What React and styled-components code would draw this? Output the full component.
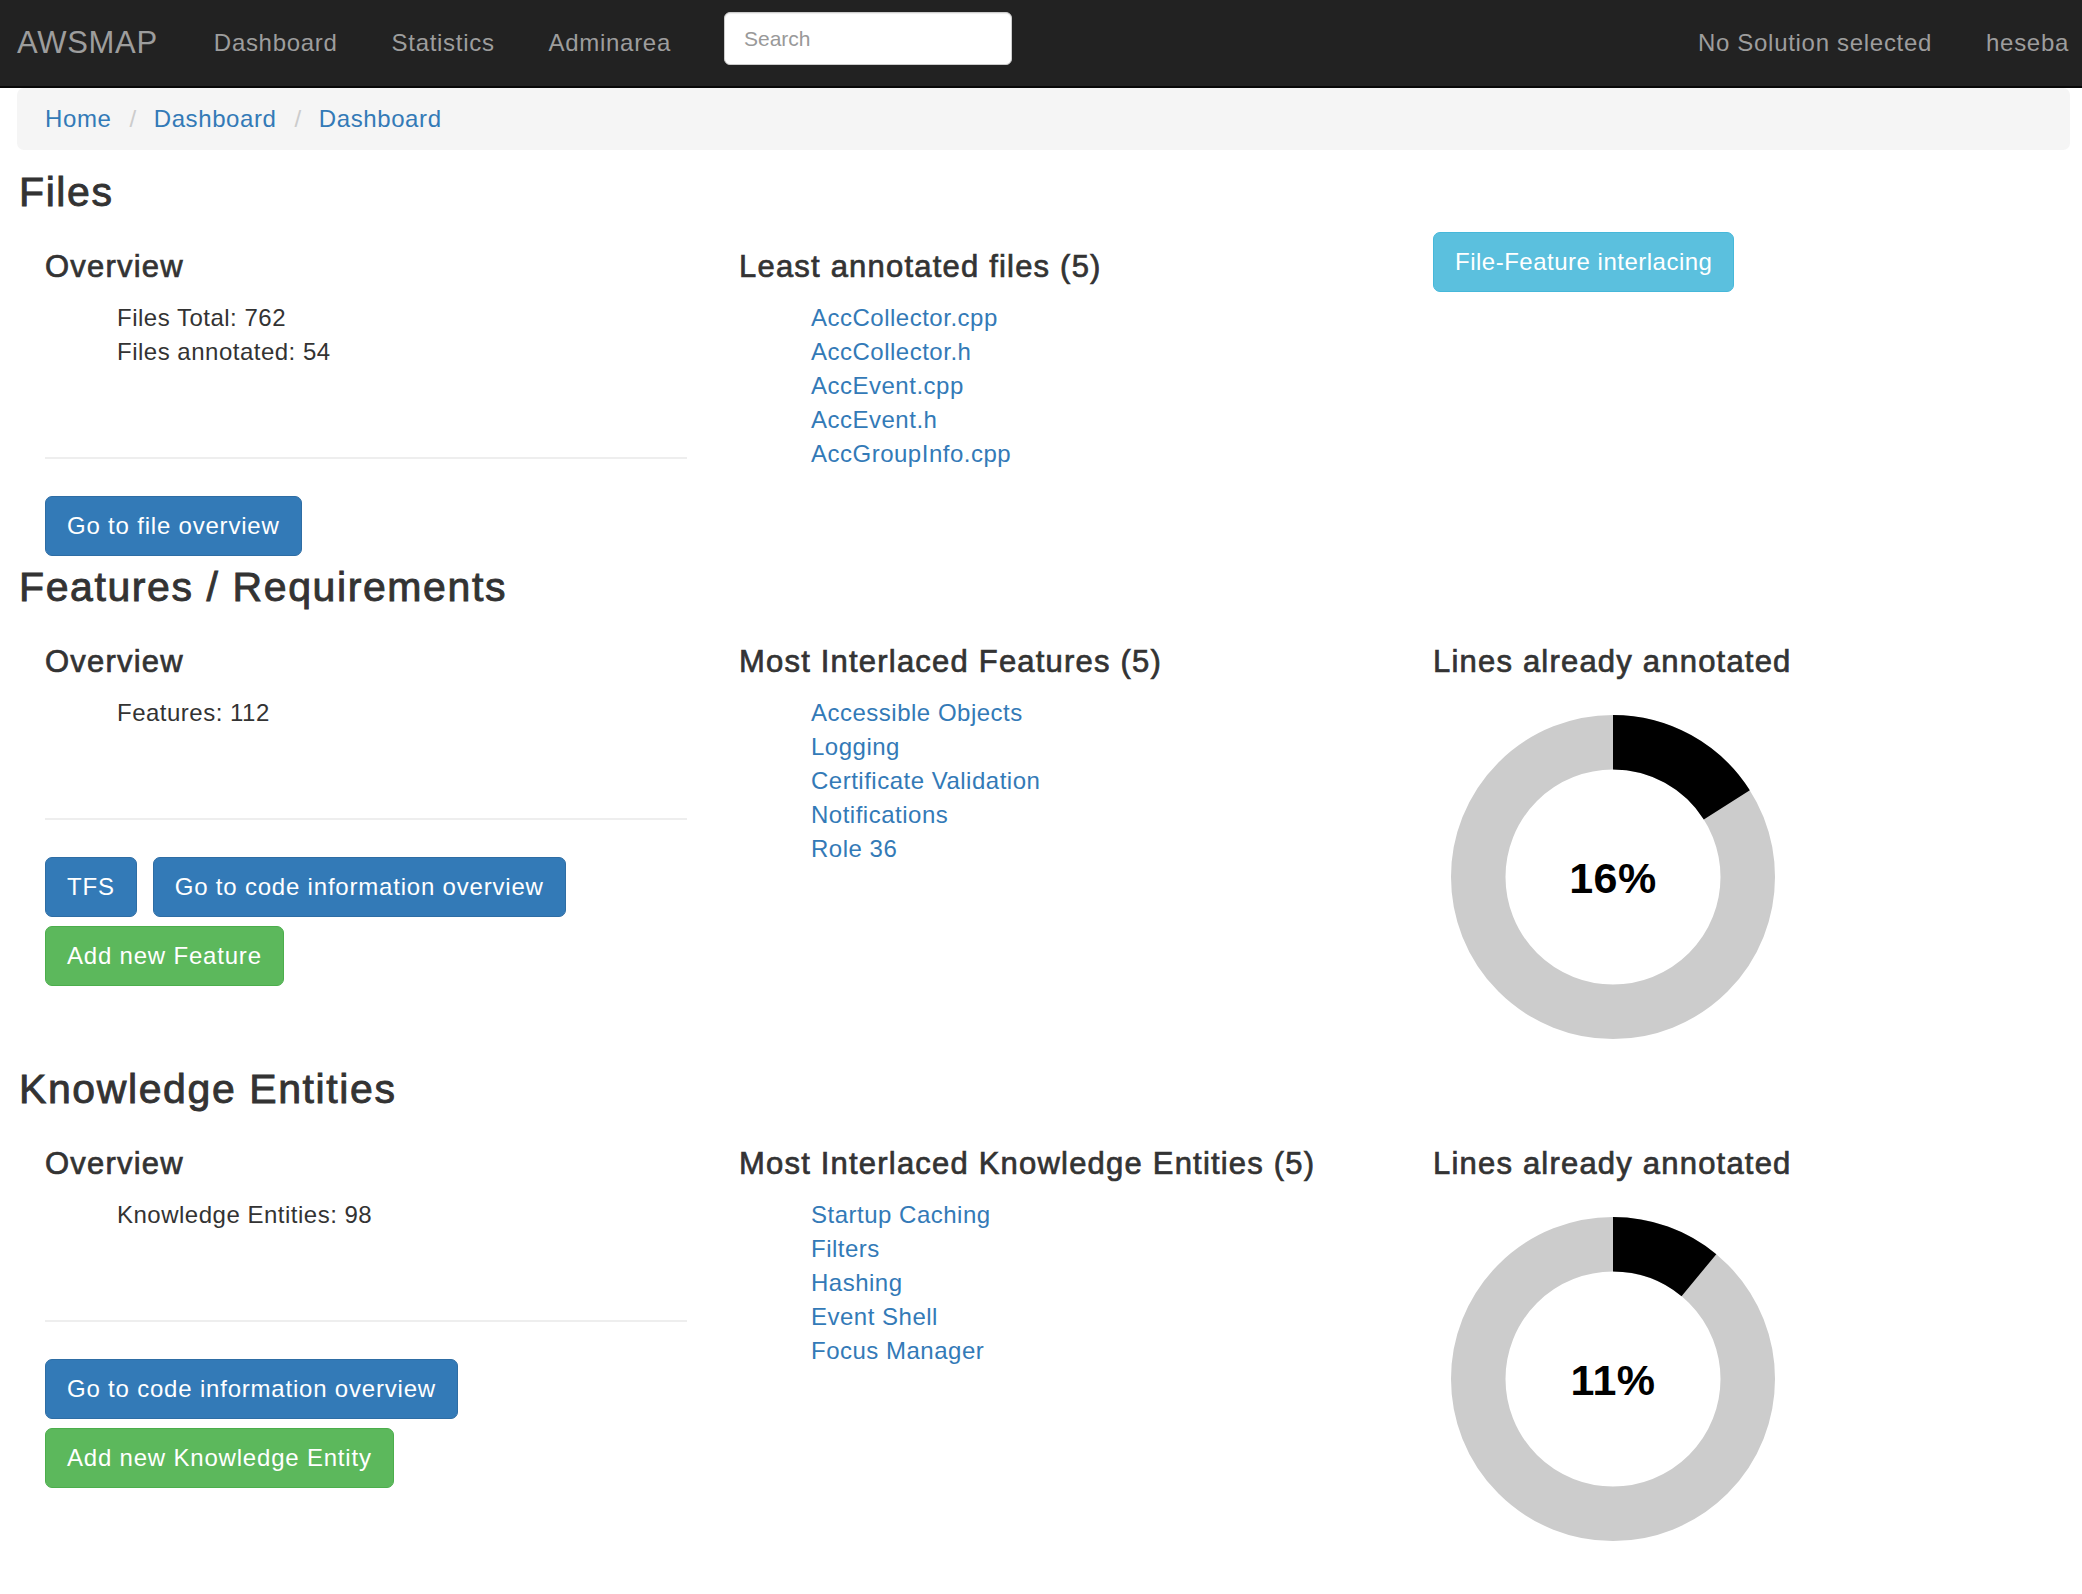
import React from 'react'
import styled, { createGlobalStyle, css } from 'styled-components'

const GlobalStyle = createGlobalStyle`
    html, body {
        margin: 0;
        padding: 0;
        background: #fff;
        overflow-x: hidden;
    }
    body {
        font-family: "Liberation Sans", Arial, Helvetica, sans-serif;
        font-size: 24px;
        line-height: 34px;
        color: #333;
        letter-spacing: 0.5px;
    }
    * { box-sizing: border-box; }
`;

const Navbar = styled.nav`
    height: 88px;
    display: flex;
    align-items: center;
    background-color: #222;
    border-bottom: 2px solid #080808;
`;

const Brand = styled.a`
    padding: 0 29px 0 17px;
    font-size: 31px;
    letter-spacing: 0.7px;
    color: #9d9d9d;
    text-decoration: none;
    white-space: nowrap;
`;

const NavLink = styled.a`
    padding: ${p => (p.$last ? '0 13px 0 27px' : '0 27px')};
    color: #9d9d9d;
    letter-spacing: 0.7px;
    text-decoration: none;
    white-space: nowrap;
`;

const SearchForm = styled.form`
    align-self: flex-start;
    padding: 12px 28px 0 26px;
    display: flex;
`;

const SearchInput = styled.input`
    width: 288px;
    height: 53px;
    padding: 0 19px;
    border: 1px solid #ccc;
    border-radius: 6px;
    box-shadow: inset 0 1px 1px rgba(0, 0, 0, 0.075);
    font-family: inherit;
    font-size: 21px;
    color: #555;
    &::placeholder { color: #999; }
`;

const NavRight = styled.div`
    margin-left: auto;
    display: flex;
    align-items: center;
`;

const Breadcrumb = styled.ol`
    display: flex;
    align-items: center;
    margin: 0 12px 0 17px;
    padding: 14px 28px;
    list-style: none;
    background-color: #f5f5f5;
    border-radius: 7px;
    letter-spacing: 0.6px;
    a { color: #337ab7; text-decoration: none; }
`;

const Separator = styled.span`
    padding: 0 17px 0 18px;
    color: #ccc;
`;

const Main = styled.main`
    padding: 11px 0 0 19px;
`;

const SectionTitle = styled.h3`
    margin: 9px 0 17px;
    font-size: 41px;
    line-height: 45px;
    font-weight: 500;
    letter-spacing: 1.6px;
    -webkit-text-stroke: 0.9px #333;
`;

const Row = styled.div`
    display: grid;
    grid-template-columns: 694px 694px 1fr;
`;

const Col = styled.div`
    padding: 0 26px;
`;

const SubTitle = styled.h4`
    margin: 18px 0 17px;
    font-size: 31px;
    line-height: 34px;
    font-weight: 500;
    letter-spacing: 1.2px;
    -webkit-text-stroke: 0.7px #333;
    white-space: nowrap;
`;

const PlainList = styled.ul`
    list-style: none;
    margin: 2px 0 ${p => (p.$spaced ? '88px' : '0')};
    padding-left: 72px;
    a { color: #337ab7; text-decoration: none; }
`;

const Divider = styled.hr`
    margin: 0 0 37px;
    border: 0;
    border-top: 2px solid #eee;
`;

const ButtonStack = styled.div`
    display: flex;
    flex-direction: column;
    align-items: flex-start;
    gap: 9px;
`;

const ButtonRow = styled.div`
    display: flex;
    gap: 16px;
`;

const variants = {
    primary: css`background-color: #337ab7; border-color: #2e6da4;`,
    success: css`background-color: #5cb85c; border-color: #4cae4c;`,
    info: css`background-color: #5bc0de; border-color: #46b8da;`,
};

const Button = styled.a`
    display: inline-block;
    padding: 12px 21px;
    border: 1px solid transparent;
    border-radius: 7px;
    color: #fff;
    letter-spacing: ${p => (p.$variant === 'info' ? '0.5px' : '0.8px')};
    text-decoration: none;
    white-space: nowrap;
    ${p => variants[p.$variant || 'primary']}
`;

const ChartBox = styled.div`
    width: 360px;
    height: 362px;
    svg { display: block; }
`;

function Donut({ percent }) {
    const r = 134.75;
    const c = 2 * Math.PI * r;
    return (
        <ChartBox>
            <svg width="360" height="362" viewBox="0 0 360 362">
                <circle cx="180" cy="181" r={r} fill="none" stroke="#ccc" strokeWidth="54.5" />
                <circle
                    cx="180" cy="181" r={r} fill="none" stroke="#000" strokeWidth="54.5"
                    strokeDasharray={`${(c * percent) / 100} ${c}`}
                    transform="rotate(-90 180 181)"
                />
                <text
                    x="180" y="196.5" textAnchor="middle" fill="#000"
                    fontFamily="'Liberation Sans', Arial, sans-serif" fontWeight="bold" fontSize="43"
                >
                    {percent}%
                </text>
            </svg>
        </ChartBox>
    );
}

const sections = [
    {
        title: 'Files',
        stats: ['Files Total: 762', 'Files annotated: 54'],
        buttons: [[{ label: 'Go to file overview' }]],
        listTitle: 'Least annotated files (5)',
        links: ['AccCollector.cpp', 'AccCollector.h', 'AccEvent.cpp', 'AccEvent.h', 'AccGroupInfo.cpp'],
        side: 'interlacing',
    },
    {
        title: 'Features / Requirements',
        stats: ['Features: 112'],
        buttons: [
            [{ label: 'TFS' }, { label: 'Go to code information overview' }],
            [{ label: 'Add new Feature', variant: 'success' }],
        ],
        listTitle: 'Most Interlaced Features (5)',
        links: ['Accessible Objects', 'Logging', 'Certificate Validation', 'Notifications', 'Role 36'],
        percent: 16,
    },
    {
        title: 'Knowledge Entities',
        stats: ['Knowledge Entities: 98'],
        buttons: [
            [{ label: 'Go to code information overview' }],
            [{ label: 'Add new Knowledge Entity', variant: 'success' }],
        ],
        listTitle: 'Most Interlaced Knowledge Entities (5)',
        links: ['Startup Caching', 'Filters', 'Hashing', 'Event Shell', 'Focus Manager'],
        percent: 11,
    },
];

function Section({ data }) {
    return (
        <section>
            <SectionTitle>{data.title}</SectionTitle>
            <Row>
                <Col>
                    <SubTitle>Overview</SubTitle>
                    <PlainList $spaced>
                        {data.stats.map(s => <li key={s}>{s}</li>)}
                    </PlainList>
                    <Divider />
                    <ButtonStack>
                        {data.buttons.map((row, i) => (
                            <ButtonRow key={i}>
                                {row.map(b => (
                                    <Button key={b.label} href="#" $variant={b.variant}>{b.label}</Button>
                                ))}
                            </ButtonRow>
                        ))}
                    </ButtonStack>
                </Col>
                <Col>
                    <SubTitle>{data.listTitle}</SubTitle>
                    <PlainList>
                        {data.links.map(l => <li key={l}><a href="#">{l}</a></li>)}
                    </PlainList>
                </Col>
                <Col>
                    {data.side === 'interlacing' ? (
                        <Button href="#" $variant="info">File-Feature interlacing</Button>
                    ) : (
                        <>
                            <SubTitle>Lines already annotated</SubTitle>
                            <Donut percent={data.percent} />
                        </>
                    )}
                </Col>
            </Row>
        </section>
    );
}

export default function App() {
    return (
        <>
            <GlobalStyle />
            <Navbar>
                <Brand href="#">AWSMAP</Brand>
                <NavLink href="#">Dashboard</NavLink>
                <NavLink href="#">Statistics</NavLink>
                <NavLink href="#">Adminarea</NavLink>
                <SearchForm onSubmit={e => e.preventDefault()}>
                    <SearchInput type="text" placeholder="Search" />
                </SearchForm>
                <NavRight>
                    <NavLink href="#">No Solution selected</NavLink>
                    <NavLink href="#" $last>heseba</NavLink>
                </NavRight>
            </Navbar>
            <Breadcrumb>
                <li><a href="#">Home</a></li>
                <Separator>/</Separator>
                <li><a href="#">Dashboard</a></li>
                <Separator>/</Separator>
                <li><a href="#">Dashboard</a></li>
            </Breadcrumb>
            <Main>
                {sections.map(s => <Section key={s.title} data={s} />)}
            </Main>
        </>
    );
}
